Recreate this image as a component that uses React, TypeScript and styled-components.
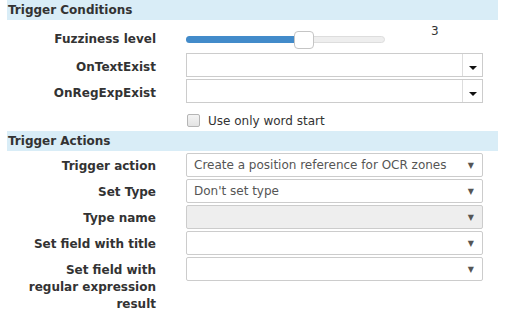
import React, { useState } from 'react';
import styled, { createGlobalStyle } from 'styled-components';

const GlobalStyle = createGlobalStyle`
  body {
    margin: 0;
    background: #fff;
    font-family: "DejaVu Sans", Verdana, sans-serif;
    font-size: 12px;
    color: #333;
  }
`;

const Page = styled.div`
  width: 491px;
  padding-left: 7px;
`;

const SectionHeader = styled.div`
  height: 20px;
  line-height: 20px;
  padding-left: 1px;
  background: #d9edf7;
  font-weight: bold;
  color: #333;
`;

const Grid = styled.div<{ $top: number; $bottom: number }>`
  display: grid;
  grid-template-columns: 149px 297px;
  column-gap: 30px;
  row-gap: 2px;
  align-items: start;
  padding-top: ${({ $top }) => $top}px;
  padding-bottom: ${({ $bottom }) => $bottom}px;
`;

const Label = styled.div<{ $pad?: number }>`
  justify-self: end;
  max-width: 130px;
  text-align: right;
  font-weight: bold;
  line-height: 17px;
  padding-top: ${({ $pad }) => $pad ?? 5}px;
  color: #333;
`;

const SliderRow = styled.div`
  display: flex;
  align-items: center;
  height: 24px;
`;

const Track = styled.div`
  position: relative;
  width: 199px;
  height: 7px;
  background: #eee;
  border: 1px solid #ddd;
  border-radius: 4px;
  box-sizing: border-box;
`;

const Fill = styled.div`
  height: 7px;
  margin-top: -1px;
  margin-left: -1px;
  background: #428bca;
  border-radius: 4px 0 0 4px;
`;

const Thumb = styled.div`
  position: absolute;
  top: -6px;
  width: 20px;
  height: 18px;
  box-sizing: border-box;
  background: #fff;
  border: 1px solid #c5c5c5;
  border-radius: 4px;
`;

const Value = styled.div`
  margin-left: 46px;
  margin-top: -16px;
  color: #333;
`;

const Combo = styled.div`
  display: flex;
  height: 24px;
  box-sizing: border-box;
  border: 1px solid #ccc;
  background: #fff;
`;

const ComboInput = styled.div`
  flex: 1;
`;

const ComboButton = styled.div`
  width: 20px;
  border-left: 1px solid #ddd;
  display: flex;
  align-items: flex-end;
  justify-content: center;
  padding-bottom: 6px;
  box-sizing: border-box;
`;

const BlackArrow = styled.div`
  width: 0;
  height: 0;
  border-left: 4px solid transparent;
  border-right: 4px solid transparent;
  border-top: 4px solid #111;
`;

const CheckRow = styled.label`
  display: flex;
  align-items: center;
  gap: 8px;
  height: 19px;
  margin-top: 6px;
  padding-left: 1px;
  color: #333;
`;

const Box = styled.span`
  width: 11px;
  height: 11px;
  border: 1px solid #b5b5b5;
  border-radius: 2px;
  background: linear-gradient(#f4f4f4, #e3e3e3);
`;

const Select = styled.div<{ $disabled?: boolean }>`
  display: flex;
  align-items: center;
  justify-content: space-between;
  height: 24px;
  box-sizing: border-box;
  padding: 0 8px 0 7px;
  border: 1px solid #ccc;
  border-radius: 2px;
  background: ${({ $disabled }) => ($disabled ? '#eee' : '#fff')};
  color: #555;
  white-space: nowrap;
`;

const Caret = styled.span`
  font-size: 8px;
  color: #555;
`;

const SelectBox: React.FC<{ text?: string; disabled?: boolean }> = ({ text, disabled }) => (
  <Select $disabled={disabled}>
    <span>{text}</span>
    <Caret>▼</Caret>
  </Select>
);

const ComboBox: React.FC = () => (
  <Combo>
    <ComboInput />
    <ComboButton>
      <BlackArrow />
    </ComboButton>
  </Combo>
);

const App: React.FC = () => {
  const [level] = useState(3);
  const pos = 107;

  return (
    <Page>
      <GlobalStyle />
      <SectionHeader>Trigger Conditions</SectionHeader>
      <Grid $top={7} $bottom={1}>
        <Label $pad={4}>Fuzziness level</Label>
        <SliderRow>
          <Track>
            <Fill style={{ width: pos + 1 }} />
            <Thumb style={{ left: pos }} />
          </Track>
          <Value>{level}</Value>
        </SliderRow>
        <Label $pad={6}>OnTextExist</Label>
        <ComboBox />
        <Label $pad={6}>OnRegExpExist</Label>
        <ComboBox />
        <div />
        <CheckRow>
          <Box />
          Use only word start
        </CheckRow>
      </Grid>
      <SectionHeader>Trigger Actions</SectionHeader>
      <Grid $top={2} $bottom={0}>
        <Label>Trigger action</Label>
        <SelectBox text="Create a position reference for OCR zones" />
        <Label>Set Type</Label>
        <SelectBox text="Don't set type" />
        <Label>Type name</Label>
        <SelectBox disabled />
        <Label>Set field with title</Label>
        <SelectBox />
        <Label>Set field with regular expression result</Label>
        <SelectBox />
      </Grid>
    </Page>
  );
};

export default App;
